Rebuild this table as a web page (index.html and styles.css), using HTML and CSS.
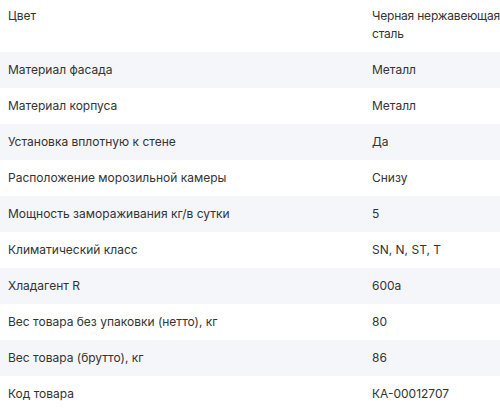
FILE: index.html
```html
<!DOCTYPE html>
<html lang="ru">
<head>
<meta charset="utf-8">
<link rel="stylesheet" href="styles.css">
</head>
<body>
<div class="specs">
  <div class="row"><div class="name">Цвет</div><div class="value tight">Черная нержавеющая сталь</div></div>
  <div class="row"><div class="name">Материал фасада</div><div class="value">Металл</div></div>
  <div class="row"><div class="name">Материал корпуса</div><div class="value">Металл</div></div>
  <div class="row"><div class="name">Установка вплотную к стене</div><div class="value">Да</div></div>
  <div class="row"><div class="name">Расположение морозильной камеры</div><div class="value">Снизу</div></div>
  <div class="row"><div class="name">Мощность замораживания кг/в сутки</div><div class="value">5</div></div>
  <div class="row"><div class="name">Климатический класс</div><div class="value">SN, N, ST, T</div></div>
  <div class="row"><div class="name">Хладагент R</div><div class="value">600a</div></div>
  <div class="row"><div class="name">Вес товара без упаковки (нетто), кг</div><div class="value">80</div></div>
  <div class="row"><div class="name">Вес товара (брутто), кг</div><div class="value">86</div></div>
  <div class="row"><div class="name">Код товара</div><div class="value">КА-00012707</div></div>
</div>
</body>
</html>
```
FILE: styles.css
```css
html, body {
  margin: 0;
  padding: 0;
  background: #ffffff;
}
body {
  font-family: Inter, "Noto Sans", sans-serif;
  font-size: 12px;
  line-height: 18px;
  color: #333333;
  overflow: hidden;
}
.specs {
  margin-top: -2px;
  width: 520px;
}
.row {
  display: grid;
  grid-template-columns: 364px 1fr;
}
.row:nth-child(even) {
  background: #f5f6fa;
}
.name {
  padding: 9px 8px;
}
.value {
  padding: 9px 8px 9px 8px;
}
.tight {
  letter-spacing: -0.2px;
}
```
